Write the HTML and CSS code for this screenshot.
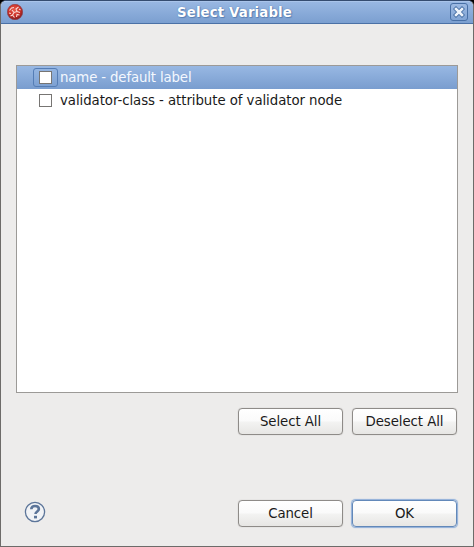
FILE: index.html
```html
<!DOCTYPE html>
<html lang="en">
<head>
<meta charset="utf-8">
<title>Select Variable</title>
<link rel="stylesheet" href="styles.css">
</head>
<body>
<div class="window">
  <header class="titlebar">
    <svg class="app-icon" width="16" height="16" viewBox="0 0 16 16">
      <defs><radialGradient id="ball" cx=".45" cy=".35" r=".65"><stop offset="0" stop-color="#e85b4c"/><stop offset=".6" stop-color="#c92f27"/><stop offset="1" stop-color="#851d20"/></radialGradient></defs>
      <circle cx="8" cy="8" r="7.700" fill="url(#ball)" stroke="#8b3a45" stroke-width=".6"/>
      <path d="M2.500 6.500 4.500 4 7 3.500M4 9.500 2 9M5 6l2 2.500L5.500 11l2 2.500M7 8.500 10 7.500 9 5l2.500-2M10 7.500l3 1M12 5l1.500 1M9.500 13l.5-2.500 2.500.5M3.500 12l2-1" fill="none" stroke="#f9d8d3" stroke-width="1.100"/>
    </svg>
    <h1 class="title">Select Variable</h1>
    <button class="close" aria-label="Close">
      <svg width="12" height="12" viewBox="0 0 12 12"><path d="M3 3l6 6M9 3l-6 6" stroke="#3f699f" stroke-width="4.200" stroke-linecap="square"/><path d="M3 3l6 6M9 3l-6 6" stroke="#edf3fb" stroke-width="2.600" stroke-linecap="square"/></svg>
    </button>
  </header>
  <main class="content">
    <ul class="list">
      <li class="row selected"><span class="check-cell"><span class="check"></span></span><span>name - default label</span></li>
      <li class="row"><span class="check-cell"><span class="check"></span></span><span>validator-class - attribute of validator node</span></li>
    </ul>
    <div class="actions">
      <button class="btn">Select All</button>
      <button class="btn">Deselect All</button>
    </div>
    <footer class="footer">
      <svg class="help" width="22" height="22" viewBox="0 0 22 22">
        <circle cx="11" cy="11" r="9.600" fill="#f1f3f6" stroke="#5c7599" stroke-width="1.300"/>
        <path d="M7.300 8.300C7.300 6 8.900 5 11 5s3.900 1.100 3.900 3.100c0 2.300-3.400 2.500-3.400 5" fill="none" stroke="#5c7599" stroke-width="2.600"/>
        <path d="M10 14.800h3v2.600h-3z" fill="#5c7599"/>
      </svg>
      <button class="btn">Cancel</button>
      <button class="btn default">OK</button>
    </footer>
  </main>
</div>
</body>
</html>
```
FILE: styles.css
```css
* { box-sizing: border-box; }
body {
  margin: 0;
  background: #000;
  font: 13.333px/16px "DejaVu Sans", sans-serif;
  color: #1a1a1a;
}
.window {
  height: 547px;
  display: flex;
  flex-direction: column;
  overflow: hidden;
  border: 1px solid #6d6b69;
  border-top-color: #354c70;
  border-radius: 6px 6px 0 0;
  background: #edeceb;
}
.titlebar {
  height: 23px;
  flex: none;
  display: flex;
  align-items: center;
  padding: 0 5px 1px 6px;
  border-top: 1px solid #a9c4ea;
  border-bottom: 1px solid #4b71a6;
  background: linear-gradient(#98b7e2, #7b9fd0);
}
.title {
  flex: 1;
  margin: 0 4px 0 0;
  padding-top: 2px;
  text-align: center;
  font-size: 13.333px;
  font-weight: bold;
  line-height: 16px;
  letter-spacing: 0.130px;
  color: #fff;
  text-shadow: 0 0 1px #3f699f, 1px 1px 1px #5b82b7;
}
.close {
  width: 18px;
  height: 18px;
  display: grid;
  place-items: center;
  padding: 0;
  border: 1px solid #4870a6;
  border-radius: 3px;
  background: linear-gradient(#9dbae3, #81a4d4);
}
.content {
  flex: 1;
  display: flex;
  flex-direction: column;
  padding: 41px 15px 19px;
}
.list {
  height: 328px;
  margin: 0;
  padding: 0;
  list-style: none;
  border: 1px solid #9c9a97;
  background: #fff;
}
.row {
  height: 23px;
  display: flex;
  align-items: center;
  gap: 2px;
  padding-left: 16px;
  letter-spacing: -0.070px;
}
.selected {
  color: #f4f8fe;
  background: linear-gradient(#98b8e3, #799dcf);
  letter-spacing: -0.150px;
}
.check-cell {
  width: 25px;
  height: 19px;
  display: grid;
  place-items: center;
  border: 1px solid transparent;
  border-radius: 3px;
}
.selected .check-cell { border-color: #557db5; }
.check {
  width: 13px;
  height: 13px;
  border: 1px solid #777573;
  background: #fff;
}
.actions {
  display: flex;
  justify-content: flex-end;
  gap: 9px;
  margin-top: 15px;
  padding-right: 1px;
}
.btn {
  width: 105px;
  height: 27px;
  padding: 1px 0 0;
  border: 1px solid #8e8b88;
  border-radius: 4px;
  background: linear-gradient(#fff 0%, #fafafa 48%, #f3f3f2 52%, #e7e6e4 100%);
  box-shadow: 0 0 1px #aaa8a5;
  font: inherit;
  letter-spacing: -0.080px;
  color: #1a1a1a;
}
.default {
  border-color: #6288b9;
  box-shadow: 0 0 1px 0.500px #8eafd9;
}
.footer {
  display: flex;
  align-items: center;
  gap: 9px;
  margin-top: auto;
  padding-right: 1px;
}
.help { margin: -3px auto 0 8px; }
```
